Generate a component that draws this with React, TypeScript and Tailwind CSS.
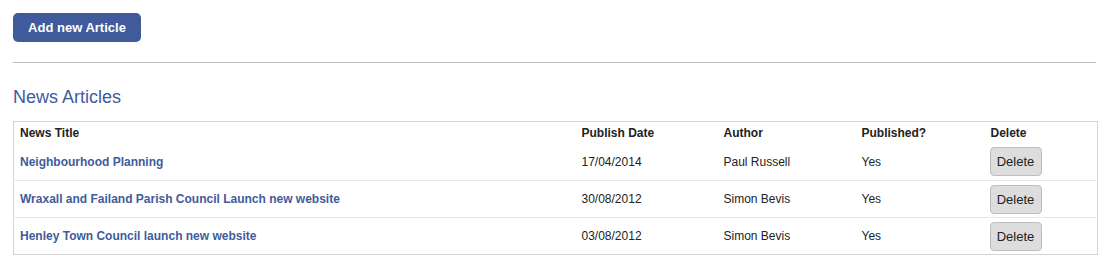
import React from "react";

const rows = [
  { title: "Neighbourhood Planning", date: "17/04/2014", author: "Paul Russell", pub: "Yes" },
  { title: "Wraxall and Failand Parish Council Launch new website", date: "30/08/2012", author: "Simon Bevis", pub: "Yes" },
  { title: "Henley Town Council launch new website", date: "03/08/2012", author: "Simon Bevis", pub: "Yes" },
];

export default function App() {
  return (
    <div className="bg-white w-[1113px] h-[266px] font-['Liberation_Sans',Arial,sans-serif] text-[#222]">
      <div className="ml-[13px] w-[1084px] pt-[13px]">
        <button className="h-[29px] w-[128px] rounded-[5px] bg-[#3f5b9c] text-white text-[13px] font-bold leading-none">
          Add new Article
        </button>
        <div className="mt-[20px] h-px bg-[#bdbdbd] w-[1083px]" />
        <h2 className="mt-[24px] text-[18px] leading-[21px] text-[#3f5b9c] font-normal">News Articles</h2>
        <table className="mt-[13px] w-[1084px] border border-[#d4d4d4] border-collapse table-fixed text-[12px]">
          <colgroup>
            <col className="w-[561px]" />
            <col className="w-[142px]" />
            <col className="w-[138px]" />
            <col className="w-[129px]" />
            <col className="w-[114px]" />
          </colgroup>
          <thead>
            <tr className="h-[22px] text-left font-bold">
              <th className="pl-[6px] font-bold">News Title</th>
              <th className="pl-[7px] font-bold">Publish Date</th>
              <th className="pl-[7px] font-bold">Author</th>
              <th className="pl-[7px] font-bold">Published?</th>
              <th className="pl-[7px] font-bold">Delete</th>
            </tr>
          </thead>
          <tbody>
            {rows.map((r, i) => (
              <tr key={i} className={`h-[37px] ${i > 0 ? "border-t border-[#e6e6e6]" : ""}`}>
                <td className="pl-[6px] font-bold text-[#3f5b9c]">{r.title}</td>
                <td className="pl-[7px]">{r.date}</td>
                <td className="pl-[7px]">{r.author}</td>
                <td className="pl-[7px]">{r.pub}</td>
                <td className="pl-[6px]">
                  <button className="h-[29px] w-[52px] rounded-[4px] border border-[#bdbdbd] bg-[#dddddd] text-[13px] text-[#222] leading-none">
                    Delete
                  </button>
                </td>
              </tr>
            ))}
          </tbody>
        </table>
      </div>
    </div>
  );
}
